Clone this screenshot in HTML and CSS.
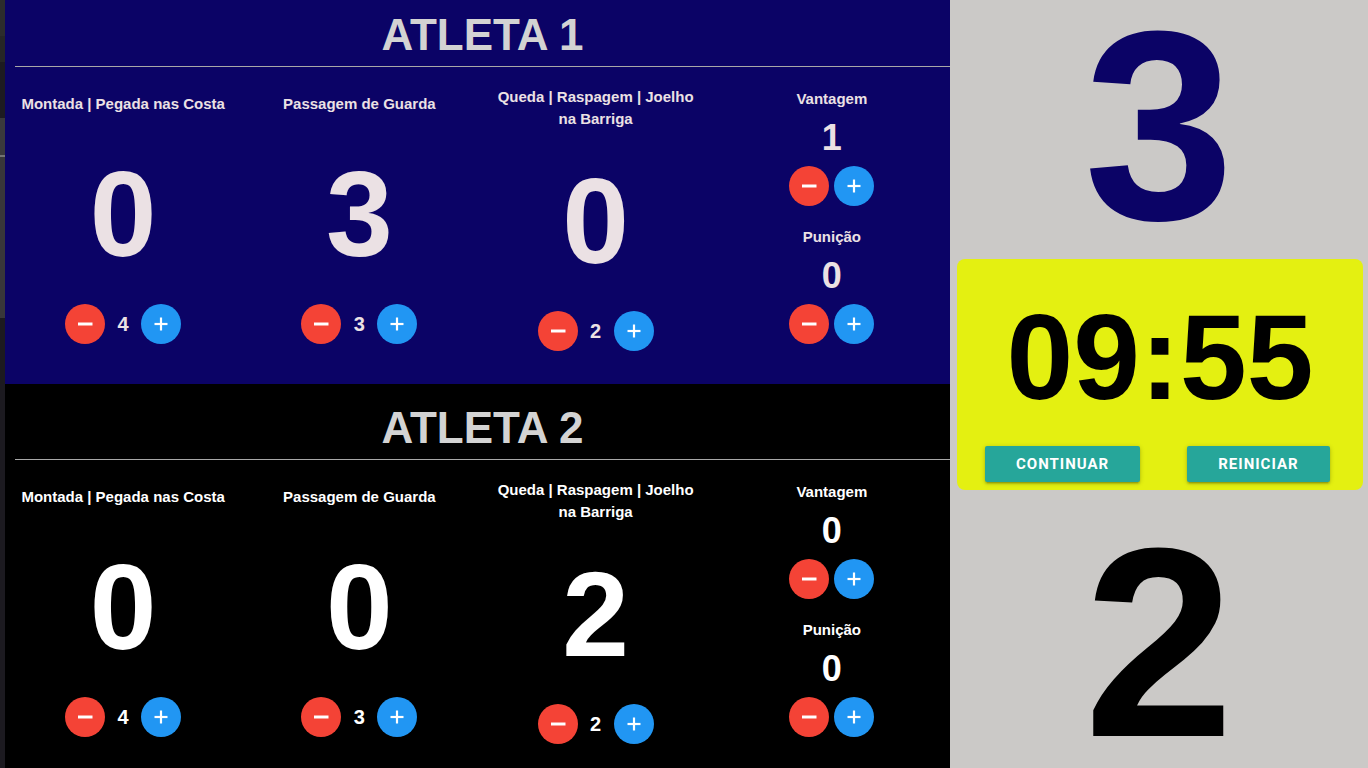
FILE: index.html
```html
<!DOCTYPE html>
<html lang="pt-BR">
<head>
<meta charset="utf-8">
<title>Placar</title>
<link rel="stylesheet" href="styles.css">
</head>
<body>
<div class="app">
  <div class="strip">
    <div class="seg s1"></div><div class="seg s2"></div><div class="seg s3"></div><div class="seg s4"></div><div class="seg s5"></div><div class="seg s6"></div><div class="seg s7"></div>
  </div>

  <div class="board">
    <section class="athlete a1">
      <h1 class="title">ATLETA 1</h1>
      <div class="rule"></div>
      <div class="cols">
        <div class="col">
          <div class="label">Montada | Pegada nas Costa</div>
          <div class="score">0</div>
          <div class="ctrl">
            <button class="btn minus"><svg viewBox="0 0 40 40"><line x1="13" y1="20" x2="27.5" y2="20"/></svg></button>
            <span class="cnt">4</span>
            <button class="btn plus"><svg viewBox="0 0 40 40"><line x1="13.5" y1="20" x2="26.5" y2="20"/><line x1="20" y1="13.5" x2="20" y2="26.5"/></svg></button>
          </div>
        </div>
        <div class="col">
          <div class="label">Passagem de Guarda</div>
          <div class="score">3</div>
          <div class="ctrl">
            <button class="btn minus"><svg viewBox="0 0 40 40"><line x1="13" y1="20" x2="27.5" y2="20"/></svg></button>
            <span class="cnt">3</span>
            <button class="btn plus"><svg viewBox="0 0 40 40"><line x1="13.5" y1="20" x2="26.5" y2="20"/><line x1="20" y1="13.5" x2="20" y2="26.5"/></svg></button>
          </div>
        </div>
        <div class="col">
          <div class="label wrap">Queda | Raspagem | Joelho na Barriga</div>
          <div class="score">0</div>
          <div class="ctrl">
            <button class="btn minus"><svg viewBox="0 0 40 40"><line x1="13" y1="20" x2="27.5" y2="20"/></svg></button>
            <span class="cnt">2</span>
            <button class="btn plus"><svg viewBox="0 0 40 40"><line x1="13.5" y1="20" x2="26.5" y2="20"/><line x1="20" y1="13.5" x2="20" y2="26.5"/></svg></button>
          </div>
        </div>
        <div class="col col-extra">
          <div class="sublabel">Vantagem</div>
          <div class="small">1</div>
          <div class="pair">
            <button class="btn minus"><svg viewBox="0 0 40 40"><line x1="13" y1="20" x2="27.5" y2="20"/></svg></button>
            <button class="btn plus"><svg viewBox="0 0 40 40"><line x1="13.5" y1="20" x2="26.5" y2="20"/><line x1="20" y1="13.5" x2="20" y2="26.5"/></svg></button>
          </div>
          <div class="sublabel next">Punição</div>
          <div class="small">0</div>
          <div class="pair">
            <button class="btn minus"><svg viewBox="0 0 40 40"><line x1="13" y1="20" x2="27.5" y2="20"/></svg></button>
            <button class="btn plus"><svg viewBox="0 0 40 40"><line x1="13.5" y1="20" x2="26.5" y2="20"/><line x1="20" y1="13.5" x2="20" y2="26.5"/></svg></button>
          </div>
        </div>
      </div>
    </section>

    <section class="athlete a2">
      <h1 class="title">ATLETA 2</h1>
      <div class="rule"></div>
      <div class="cols">
        <div class="col">
          <div class="label">Montada | Pegada nas Costa</div>
          <div class="score">0</div>
          <div class="ctrl">
            <button class="btn minus"><svg viewBox="0 0 40 40"><line x1="13" y1="20" x2="27.5" y2="20"/></svg></button>
            <span class="cnt">4</span>
            <button class="btn plus"><svg viewBox="0 0 40 40"><line x1="13.5" y1="20" x2="26.5" y2="20"/><line x1="20" y1="13.5" x2="20" y2="26.5"/></svg></button>
          </div>
        </div>
        <div class="col">
          <div class="label">Passagem de Guarda</div>
          <div class="score">0</div>
          <div class="ctrl">
            <button class="btn minus"><svg viewBox="0 0 40 40"><line x1="13" y1="20" x2="27.5" y2="20"/></svg></button>
            <span class="cnt">3</span>
            <button class="btn plus"><svg viewBox="0 0 40 40"><line x1="13.5" y1="20" x2="26.5" y2="20"/><line x1="20" y1="13.5" x2="20" y2="26.5"/></svg></button>
          </div>
        </div>
        <div class="col">
          <div class="label wrap">Queda | Raspagem | Joelho na Barriga</div>
          <div class="score">2</div>
          <div class="ctrl">
            <button class="btn minus"><svg viewBox="0 0 40 40"><line x1="13" y1="20" x2="27.5" y2="20"/></svg></button>
            <span class="cnt">2</span>
            <button class="btn plus"><svg viewBox="0 0 40 40"><line x1="13.5" y1="20" x2="26.5" y2="20"/><line x1="20" y1="13.5" x2="20" y2="26.5"/></svg></button>
          </div>
        </div>
        <div class="col col-extra">
          <div class="sublabel">Vantagem</div>
          <div class="small">0</div>
          <div class="pair">
            <button class="btn minus"><svg viewBox="0 0 40 40"><line x1="13" y1="20" x2="27.5" y2="20"/></svg></button>
            <button class="btn plus"><svg viewBox="0 0 40 40"><line x1="13.5" y1="20" x2="26.5" y2="20"/><line x1="20" y1="13.5" x2="20" y2="26.5"/></svg></button>
          </div>
          <div class="sublabel next">Punição</div>
          <div class="small">0</div>
          <div class="pair">
            <button class="btn minus"><svg viewBox="0 0 40 40"><line x1="13" y1="20" x2="27.5" y2="20"/></svg></button>
            <button class="btn plus"><svg viewBox="0 0 40 40"><line x1="13.5" y1="20" x2="26.5" y2="20"/><line x1="20" y1="13.5" x2="20" y2="26.5"/></svg></button>
          </div>
        </div>
      </div>
    </section>
  </div>

  <aside class="side">
    <div class="total t1">3</div>
    <div class="timer">
      <div class="clock">09:55</div>
      <div class="actions">
        <button class="action">CONTINUAR</button>
        <button class="action">REINICIAR</button>
      </div>
    </div>
    <div class="total t2">2</div>
  </aside>
</div>
</body>
</html>
```

FILE: styles.css
```css
* { box-sizing: border-box; }

html, body {
  margin: 0;
  padding: 0;
  height: 100%;
  overflow: hidden;
}

body {
  font-family: "Liberation Sans", Arial, sans-serif;
  background: #000;
}

.app {
  display: flex;
  height: 768px;
  overflow: hidden;
}

/* left dark strip */
.strip {
  width: 5px;
  flex: none;
  display: flex;
  flex-direction: column;
  background: #1c1a20;
}
.seg { width: 100%; }
.s1 { height: 36px; background: #2c2c2c; }
.s2 { height: 26px; background: #262626; }
.s3 { height: 56px; background: #1d1b21; }
.s4 { height: 37px; background: #3a393c; }
.s5 { height: 2px; background: #747474; }
.s6 { height: 161px; background: #38373a; }
.s7 { flex: 1; background: #1c1a20; }

/* scoreboard */
.board {
  width: 945px;
  flex: none;
  display: flex;
  flex-direction: column;
  margin-top: -9px;
}

.athlete {
  height: 393px;
  flex: none;
  display: flex;
  flex-direction: column;
}
.a1 { background: #0b0366; color: #ebe1e4; }
.a2 { background: #000; color: #fff; }

.title {
  margin: 0 0 7px 10px;
  padding-top: 20px;
  font-size: 44px;
  line-height: 48px;
  font-weight: bold;
  text-align: center;
  color: #d3d3d3;
}

.rule {
  height: 1px;
  margin-left: 10px;
  background: #a8a8a8;
}

.cols {
  flex: 1;
  display: flex;
  align-items: center;
  padding-bottom: 14px;
}

.col {
  flex: 1;
  display: flex;
  flex-direction: column;
  align-items: center;
  padding: 0 12px;
  text-align: center;
}
.col-extra { margin-bottom: 5px; }

.label,
.sublabel {
  font-size: 15px;
  font-weight: bold;
  line-height: 22px;
}
.label { margin-bottom: 39px; }
.label.wrap { margin-bottom: 31px; }

.score {
  font-size: 120px;
  font-weight: bold;
  line-height: 1;
  margin-bottom: 30px;
}

.ctrl {
  display: flex;
  align-items: center;
}

.cnt {
  font-size: 20px;
  font-weight: bold;
  line-height: 40px;
  width: 12px;
  margin: 0 12px;
  text-align: center;
}

/* vantage / punishment column */
.small {
  font-size: 36px;
  font-weight: bold;
  line-height: 41px;
  margin: 7px 0 8px;
}
.sublabel.next { margin-top: 20px; }

.pair {
  display: flex;
  gap: 5px;
}

.btn {
  width: 40px;
  height: 40px;
  padding: 0;
  border: none;
  border-radius: 50%;
  display: flex;
  align-items: center;
  justify-content: center;
  cursor: pointer;
}
.btn svg {
  width: 40px;
  height: 40px;
  display: block;
}
.btn line {
  stroke: #fff;
  stroke-linecap: butt;
}
.minus { background: #f44336; }
.minus line { stroke-width: 3; }
.plus { background: #2196f3; }
.plus line { stroke-width: 2.2; }

/* right side */
.side {
  width: 418px;
  flex: none;
  background: #cbc9c7;
  display: flex;
  flex-direction: column;
}

.total {
  font-size: 270px;
  font-weight: bold;
  line-height: 250px;
  height: 250px;
  text-align: center;
}
.t1 { color: #0b0366; margin-top: 1px; }
.t2 { color: #000; margin-top: 28px; }

.timer {
  margin: 8px 5px 0 7px;
  height: 231px;
  background: #e4f011;
  border-radius: 8px;
  padding: 38px 0 8px;
  display: flex;
  flex-direction: column;
}

.clock {
  font-size: 120px;
  font-weight: bold;
  line-height: 1;
  text-align: center;
  color: #000;
}

.actions {
  margin-top: 29px;
  display: flex;
  padding-left: 28px;
  gap: 47px;
}

.action {
  height: 36px;
  padding: 0 31px;
  border: none;
  border-radius: 2px;
  background: #26a69a;
  color: #fff;
  font-family: Roboto, "Liberation Sans", Arial, sans-serif;
  font-size: 15px;
  font-weight: 700;
  letter-spacing: 1px;
  box-shadow: 0 2px 2px 0 rgba(0,0,0,0.14), 0 3px 1px -2px rgba(0,0,0,0.12), 0 1px 5px 0 rgba(0,0,0,0.2);
  cursor: pointer;
}
```
